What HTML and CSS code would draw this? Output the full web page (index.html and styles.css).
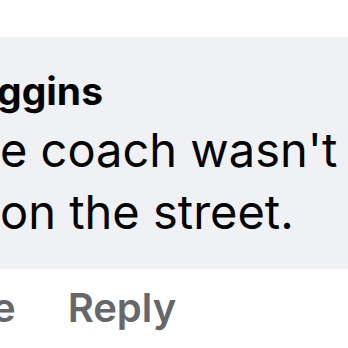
FILE: index.html
```html
<!DOCTYPE html>
<html>
	<head>
		<meta charset="UTF-8">
		<title>Comment</title>
		<link rel="stylesheet" href="styles.css">
	</head>
	<body>
		<div class="comment">
			<div class="bubble">
				<div class="name"><span class="cut-name">ggins</span></div>
				<div class="text">
					<span class="line">e coach wasn't</span>
					<span class="line">on the street.</span>
				</div>
			</div>
			<div class="actions">
				<span class="like">Like</span>
				<span class="reply">Reply</span>
			</div>
		</div>
	</body>
</html>
```

FILE: styles.css
```css
*{
	margin: 0;
	padding: 0;
}
html, body{
	width: 348px;
	height: 348px;
	overflow: hidden;
	background: #fff;
}
body{
	font-family: Inter, "Noto Sans", "Liberation Sans", sans-serif;
	color: #050505;
}
.comment{
	padding-top: 37px;
}
.bubble{
	height: 232px;
	background-color: #f0f1f5;
	overflow: hidden;
	box-sizing: border-box;
	padding-top: 29px;
}
.name{
	font-size: 39px;
	font-weight: 700;
	line-height: 50px;
	white-space: nowrap;
}
.cut-name{
	display: block;
	margin-left: -3px;
}
.text{
	margin-top: 3px;
	font-size: 47px;
	line-height: 62px;
	white-space: nowrap;
}
.line{
	display: block;
}
.actions{
	display: flex;
	gap: 52px;
	padding-top: 14px;
	font-size: 40px;
	font-weight: 600;
	color: #65676b;
	white-space: nowrap;
}
.like{
	margin-left: -63px;
}
```
